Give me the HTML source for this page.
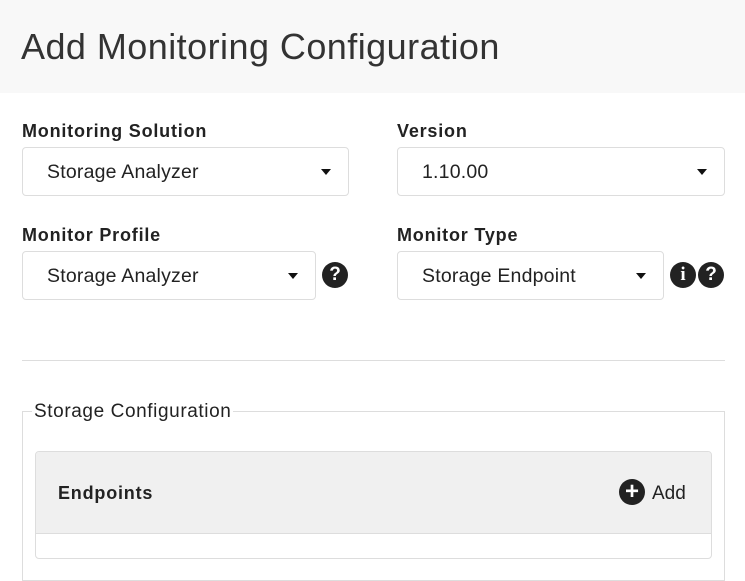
<!DOCTYPE html>
<html><head><meta charset="utf-8"><style>
*{margin:0;padding:0;box-sizing:border-box}
body{width:745px;height:567px;overflow:hidden;background:#fff;font-family:"Liberation Sans",sans-serif;color:#222;position:relative}
.hdr{position:absolute;left:0;top:0;width:745px;height:93px;background:#f8f8f8}
.title{position:absolute;left:21px;top:26px;font-size:36px;font-weight:normal;color:#333;letter-spacing:0.45px;white-space:nowrap}
.lbl{position:absolute;font-size:18px;font-weight:bold;color:#222;white-space:nowrap;letter-spacing:0.8px}
.sel{position:absolute;height:49px;border:1px solid #ddd;border-radius:4px;background:#fff;font-size:19.5px;padding-left:24px;line-height:49px;color:#222;white-space:nowrap;letter-spacing:0.2px}
.sel:after{content:"";position:absolute;right:17px;top:21px;border-left:5px solid transparent;border-right:5px solid transparent;border-top:6px solid #111}
.ic{position:absolute;width:26px;height:26px;border-radius:50%;background:#222;color:#fff;font-weight:bold;text-align:center;line-height:26px;font-size:19px}
.hr{position:absolute;left:22px;top:360px;width:703px;height:1px;background:#ddd}
.fs{position:absolute;left:22px;top:411px;width:703px;height:170px;border:1px solid #ddd}
.legend{position:absolute;left:32px;top:401px;background:#fff;padding:0 2px;font-size:19px;color:#222;letter-spacing:0.6px}
.panel{position:absolute;left:35px;top:451px;width:677px;height:108px;border:1px solid #ddd;border-radius:4px;overflow:hidden}
.ph{height:82px;background:#f0f0f0;border-bottom:1px solid #ddd}
</style></head><body>
<div class="hdr"><div class="title">Add Monitoring Configuration</div></div>
<div class="lbl" style="left:22px;top:121px">Monitoring Solution</div>
<div class="lbl" style="left:397px;top:121px">Version</div>
<div class="sel" style="left:22px;top:147px;width:327px">Storage Analyzer</div>
<div class="sel" style="left:397px;top:147px;width:328px">1.10.00</div>
<div class="lbl" style="left:22px;top:225px">Monitor Profile</div>
<div class="lbl" style="left:397px;top:225px">Monitor Type</div>
<div class="sel" style="left:22px;top:251px;width:294px">Storage Analyzer</div>
<div class="ic" style="left:322px;top:262px">?</div>
<div class="sel" style="left:397px;top:251px;width:267px">Storage Endpoint</div>
<div class="ic" style="left:670px;top:262px;font-family:'Liberation Serif',serif">i</div>
<div class="ic" style="left:698px;top:262px">?</div>
<div class="hr"></div>
<div class="fs"></div>
<div class="legend">Storage Configuration</div>
<div class="panel"><div class="ph"></div></div>
<div class="lbl" style="left:58px;top:483px">Endpoints</div>
<div class="ic" style="left:619px;top:479px;font-size:24px;line-height:25px">+</div>
<div style="position:absolute;left:652px;top:483px;font-size:19px;color:#222">Add</div>
</body></html>
